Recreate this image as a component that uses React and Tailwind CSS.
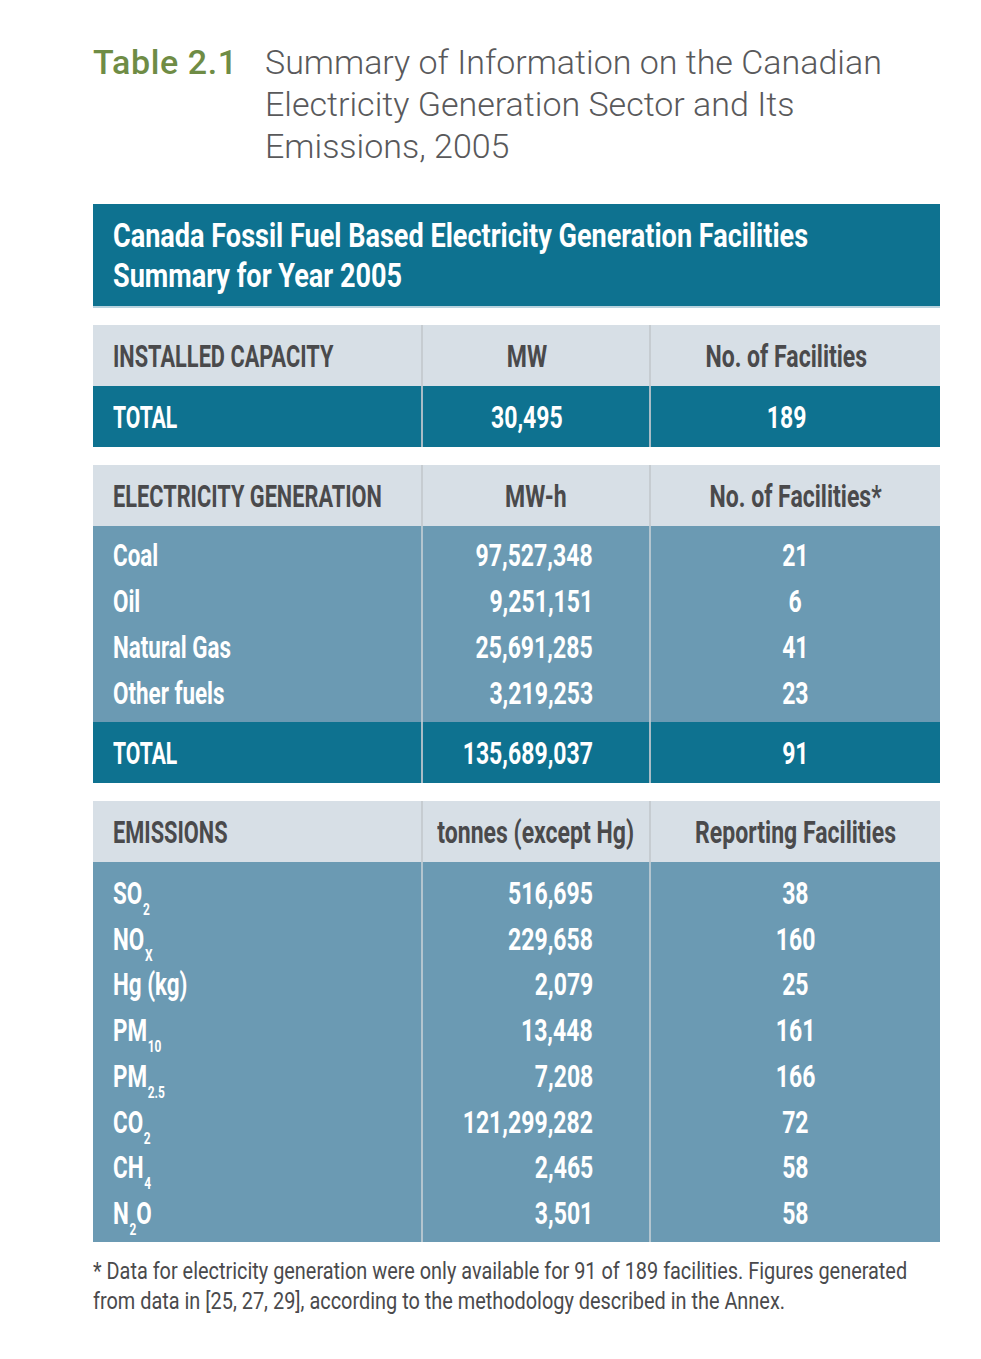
import React from "react";

// condensed look: no condensed face is installed, so squeeze Roboto horizontally
const C = ({ children, o = "origin-left", s = "scale-x-[0.72]" }) => (
  <span className={`inline-block whitespace-nowrap ${s} ${o}`}>{children}</span>
);

const Sub = ({ children }) => (
  <sub className="text-[17px] relative top-[11px] align-baseline ml-[1px]">{children}</sub>
);

const cols = "grid grid-cols-[330px_228px_minmax(0,1fr)]";

const SectionHead = ({ label, unit, count, shift = "" }) => (
  <div className={`${cols} bg-[#d7dfe6] text-[#4a4a4c] h-[61px] text-[32px] font-bold`}>
    <div className="flex items-center pl-5 border-r-2 border-[#c6ccd1]">
      <C s="scale-x-[0.68]">{label}</C>
    </div>
    <div className={`flex items-center justify-center border-r-2 border-[#c6ccd1] ${shift}`}>
      <C o="origin-center">{unit}</C>
    </div>
    <div className={`flex items-center justify-center ${shift}`}>
      <C o="origin-center">{count}</C>
    </div>
  </div>
);

const TotalRow = ({ value, count, center }) => (
  <div className={`${cols} bg-[#0e7290] text-white h-[61px] text-[32px] font-bold`}>
    <div className="flex items-center pl-5 border-r-2 border-[#a9bcc6]">
      <C s="scale-x-[0.66]">TOTAL</C>
    </div>
    {center ? (
      <div className="flex items-center justify-center pr-[18px] border-r-2 border-[#a9bcc6]">
        <C o="origin-center">{value}</C>
      </div>
    ) : (
      <div className="flex items-center justify-end pr-14 border-r-2 border-[#a9bcc6]">
        <C o="origin-right">{value}</C>
      </div>
    )}
    <div className={`flex items-center justify-center ${center ? "pr-[18px]" : ""}`}>
      <C o="origin-center">{count}</C>
    </div>
  </div>
);

const DataRows = ({ rows, rowH, pad }) => (
  <div className={`${cols} bg-[#6b9ab3] text-white text-[32px] font-bold`}>
    <div className={`flex flex-col pl-5 ${pad} border-r-2 border-[#b3c5cf]`}>
      {rows.map((r, i) => (
        <div key={i} className={`${rowH} flex items-center`}>
          <C s="scale-x-[0.7]">{r[0]}</C>
        </div>
      ))}
    </div>
    <div className={`flex flex-col pr-14 ${pad} items-end border-r-2 border-[#b3c5cf]`}>
      {rows.map((r, i) => (
        <div key={i} className={`${rowH} flex items-center`}>
          <C o="origin-right">{r[1]}</C>
        </div>
      ))}
    </div>
    <div className={`flex flex-col ${pad} items-center`}>
      {rows.map((r, i) => (
        <div key={i} className={`${rowH} flex items-center`}>
          <C o="origin-center">{r[2]}</C>
        </div>
      ))}
    </div>
  </div>
);

export default function App() {
  const gen = [
    ["Coal", "97,527,348", "21"],
    ["Oil", "9,251,151", "6"],
    ["Natural Gas", "25,691,285", "41"],
    ["Other fuels", "3,219,253", "23"],
  ];
  const emis = [
    [<>SO<Sub>2</Sub></>, "516,695", "38"],
    [<>NO<Sub>X</Sub></>, "229,658", "160"],
    ["Hg (kg)", "2,079", "25"],
    [<>PM<Sub>10</Sub></>, "13,448", "161"],
    [<>PM<Sub>2.5</Sub></>, "7,208", "166"],
    [<>CO<Sub>2</Sub></>, "121,299,282", "72"],
    [<>CH<Sub>4</Sub></>, "2,465", "58"],
    [<>N<Sub>2</Sub>O</>, "3,501", "58"],
  ];
  return (
    <div className="w-[981px] min-h-[1359px] overflow-hidden bg-white pt-[41px] pl-[93px] pr-[41px] font-['Roboto',sans-serif]">
      <div className="flex text-[34px] leading-[42px] font-light text-[#59595b]">
        <div className="w-[172px] font-medium tracking-[0.6px] text-[#6f8c45]">Table 2.1</div>
        <div>
          Summary of Information on the Canadian
          <br />
          Electricity Generation Sector and Its
          <br />
          Emissions, 2005
        </div>
      </div>

      <div className="mt-[37px]">
        <div className="h-[104px] bg-[#0e7290] text-white text-[33px] leading-[40px] font-bold px-5 pt-[12px] border-b-2 border-[#b8d3df]">
          <C s="scale-x-[0.82]">Canada Fossil Fuel Based Electricity Generation Facilities</C>
          <br />
          <C s="scale-x-[0.82]">Summary for Year 2005</C>
        </div>

        <div className="mt-[17px]">
          <SectionHead label="INSTALLED CAPACITY" unit="MW" count="No. of Facilities" shift="pr-[18px]" />
          <TotalRow value="30,495" count="189" center />
        </div>

        <div className="mt-[18px]">
          <SectionHead label="ELECTRICITY GENERATION" unit="MW-h" count="No. of Facilities*" />
          <DataRows rows={gen} rowH="h-[46px]" pad="py-[6px]" />
          <TotalRow value="135,689,037" count="91" />
        </div>

        <div className="mt-[18px]">
          <SectionHead label="EMISSIONS" unit="tonnes (except Hg)" count="Reporting Facilities" />
          <DataRows rows={emis} rowH="h-[45.75px]" pad="pt-[8px] pb-[6px]" />
        </div>

        <p className="mt-[15px] text-[23px] leading-[30px] text-[#4a4a4c]">
          <C s="scale-x-[0.865]">
            * Data for electricity generation were only available for 91 of 189 facilities. Figures generated
          </C>
          <br />
          <C s="scale-x-[0.865]">
            from data in [25, 27, 29], according to the methodology described in the Annex.
          </C>
        </p>
      </div>
    </div>
  );
}
